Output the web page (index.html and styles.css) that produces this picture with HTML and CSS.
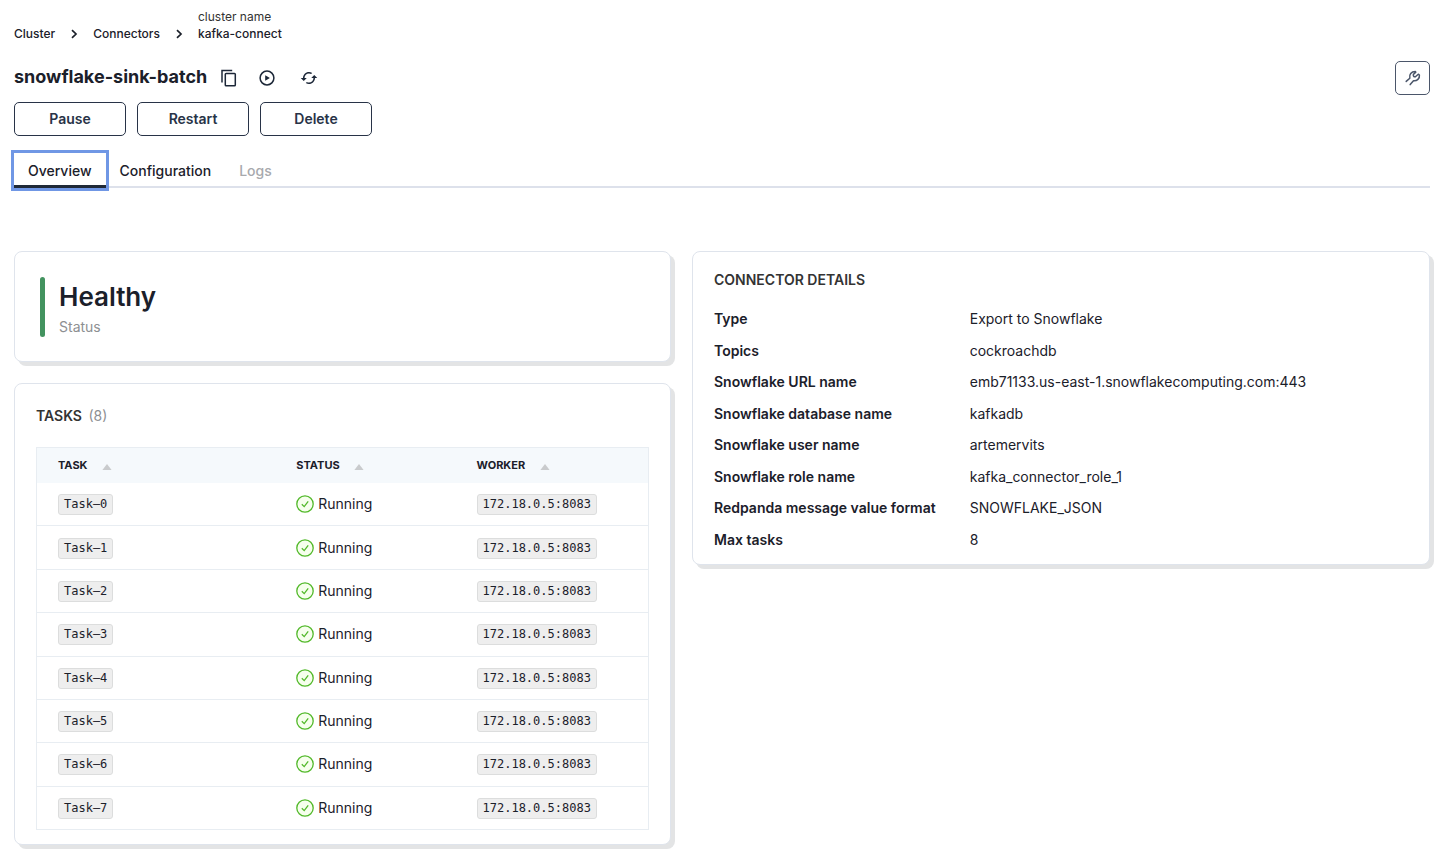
FILE: index.html
```html
<!DOCTYPE html>
<html lang="en">
<head>
<meta charset="utf-8">
<title>snowflake-sink-batch</title>
<link rel="stylesheet" href="styles.css">
</head>
<body>
<svg class="sprite" aria-hidden="true">
  <symbol id="chevron" viewBox="0 0 8 10"><path d="M2 1.2 6 5 2 8.8" fill="none" stroke="currentColor" stroke-width="1.7"/></symbol>
  <symbol id="ok" viewBox="0 0 18 18"><circle cx="9" cy="9" r="8.2" fill="#f6ffed" stroke="#52b92a" stroke-width="1.3"/><path d="M5.8 9.2 8.2 11.6 12.2 6.3" fill="none" stroke="#52b92a" stroke-width="1.3"/></symbol>
  <symbol id="sort" viewBox="0 0 10 6"><path d="M5 0 9.6 6H.4z" fill="#c9cbcd"/></symbol>
</svg>
<main class="page">
  <nav class="breadcrumb" aria-label="Breadcrumb">
    <a href="#">Cluster</a>
    <svg class="chevron"><use href="#chevron"/></svg>
    <a href="#">Connectors</a>
    <svg class="chevron"><use href="#chevron"/></svg>
    <a href="#" class="current"><span class="hint">cluster name</span><span>kafka-connect</span></a>
  </nav>

  <header class="heading">
    <h1>snowflake-sink-batch</h1>
    <button class="icon-button copy" aria-label="Copy name"><svg viewBox="0 0 18 18"><path d="M2 13.5V1.4H12.2" fill="none" stroke="currentColor" stroke-width="1.5"/><rect x="5.3" y="4.4" width="10" height="12.3" rx=".8" fill="none" stroke="currentColor" stroke-width="1.5"/></svg></button>
    <button class="icon-button play" aria-label="Run"><svg viewBox="0 0 18 18"><circle cx="9" cy="9" r="6.9" fill="none" stroke="currentColor" stroke-width="1.5"/><path d="M7.2 6.2 11.9 9 7.2 11.8z" fill="currentColor"/></svg></button>
    <button class="icon-button" aria-label="Refresh"><svg viewBox="0 0 24 24"><path fill="currentColor" d="M19 8l-4 4h3c0 3.31-2.69 6-6 6-1.01 0-1.97-.25-2.8-.7l-1.46 1.46A7.93 7.93 0 0 0 12 20c4.42 0 8-3.58 8-8h3l-4-4zM6 12c0-3.31 2.69-6 6-6 1.01 0 1.97.25 2.8.7l1.46-1.46A7.93 7.93 0 0 0 12 4c-4.42 0-8 3.58-8 8H1l4 4 4-4H6z"/></svg></button>
    <button class="tool" aria-label="Settings"><svg viewBox="0 0 18 18"><path d="M2.2 12.4 5.8 9.2C5 5.5 7.2 2.6 11.3 2.5L11.8 3.2 9.4 5.4C9 6.8 9.8 8 11.4 7.8L14.3 5.2 15.4 6C15.9 9.6 12.9 12.2 9.5 11.7L6.2 15.6" fill="none" stroke="currentColor" stroke-width="1.5" stroke-linejoin="round" stroke-linecap="round"/></svg></button>
  </header>

  <div class="actions">
    <button>Pause</button>
    <button>Restart</button>
    <button>Delete</button>
  </div>

  <div class="tabs" role="tablist">
    <button class="active" role="tab" aria-selected="true">Overview</button>
    <button role="tab" aria-selected="false">Configuration</button>
    <button role="tab" aria-selected="false" disabled>Logs</button>
  </div>

  <div class="columns">
    <div class="left">
      <section class="card health">
        <div class="bar"></div>
        <div>
          <div class="state">Healthy</div>
          <div class="label">Status</div>
        </div>
      </section>

      <section class="card tasks">
        <h2>Tasks <span class="count">(8)</span></h2>
        <table>
          <thead>
            <tr>
              <th class="col-task">Task <svg><use href="#sort"/></svg></th>
              <th class="col-status">Status <svg><use href="#sort"/></svg></th>
              <th>Worker <svg><use href="#sort"/></svg></th>
            </tr>
          </thead>
          <tbody>
            <tr><td><code>Task–0</code></td><td><span class="running"><svg><use href="#ok"/></svg>Running</span></td><td><code>172.18.0.5:8083</code></td></tr>
            <tr><td><code>Task–1</code></td><td><span class="running"><svg><use href="#ok"/></svg>Running</span></td><td><code>172.18.0.5:8083</code></td></tr>
            <tr><td><code>Task–2</code></td><td><span class="running"><svg><use href="#ok"/></svg>Running</span></td><td><code>172.18.0.5:8083</code></td></tr>
            <tr><td><code>Task–3</code></td><td><span class="running"><svg><use href="#ok"/></svg>Running</span></td><td><code>172.18.0.5:8083</code></td></tr>
            <tr><td><code>Task–4</code></td><td><span class="running"><svg><use href="#ok"/></svg>Running</span></td><td><code>172.18.0.5:8083</code></td></tr>
            <tr><td><code>Task–5</code></td><td><span class="running"><svg><use href="#ok"/></svg>Running</span></td><td><code>172.18.0.5:8083</code></td></tr>
            <tr><td><code>Task–6</code></td><td><span class="running"><svg><use href="#ok"/></svg>Running</span></td><td><code>172.18.0.5:8083</code></td></tr>
            <tr><td><code>Task–7</code></td><td><span class="running"><svg><use href="#ok"/></svg>Running</span></td><td><code>172.18.0.5:8083</code></td></tr>
          </tbody>
        </table>
      </section>
    </div>

    <section class="card details">
      <h2>Connector Details</h2>
      <dl>
        <dt>Type</dt><dd>Export to Snowflake</dd>
        <dt>Topics</dt><dd>cockroachdb</dd>
        <dt>Snowflake URL name</dt><dd>emb71133.us-east-1.snowflakecomputing.com:443</dd>
        <dt>Snowflake database name</dt><dd>kafkadb</dd>
        <dt>Snowflake user name</dt><dd>artemervits</dd>
        <dt>Snowflake role name</dt><dd>kafka_connector_role_1</dd>
        <dt>Redpanda message value format</dt><dd>SNOWFLAKE_JSON</dd>
        <dt>Max tasks</dt><dd>8</dd>
      </dl>
    </section>
  </div>
</main>
</body>
</html>
```
FILE: styles.css
```css
* { box-sizing: border-box; }
body {
  margin: 0;
  background: #fff;
  color: #1b202a;
  font: 14px/20px Inter, "Liberation Sans", sans-serif;
}
button {
  font: inherit;
  color: inherit;
  background: none;
  border: 0;
  padding: 0;
}
svg { display: block; }
h1, h2, dl, dd { margin: 0; }
.sprite { position: absolute; width: 0; height: 0; }
.page { padding: 8px 7px 12px 14px; }

.breadcrumb {
  display: flex;
  align-items: flex-end;
  font-size: 12px;
  line-height: 17px;
  font-weight: 500;
}
.breadcrumb a { color: inherit; text-decoration: none; }
.chevron { width: 8px; height: 10px; margin: 0 15px 3px; }
.current { display: flex; flex-direction: column; }
.hint { font-weight: 400; color: #333; }

.heading {
  display: flex;
  align-items: center;
  margin-top: 19px;
  color: #1c2738;
}
h1 {
  margin-right: 13px;
  padding-bottom: 2px;
  font-size: 18px;
  line-height: 24px;
  font-weight: 700;
  color: #1b202a;
}
.icon-button svg { width: 18px; height: 18px; }
.copy { margin-right: 20px; }
.play { margin-right: 24px; }
.tool {
  display: grid;
  place-items: center;
  width: 35px;
  height: 34px;
  margin-left: auto;
  border: 1px solid #4b566a;
  border-radius: 5px;
  color: #4b566a;
}
.tool svg { width: 18px; height: 18px; }

.actions { display: flex; gap: 11px; margin-top: 7px; }
.actions button {
  width: 112px;
  height: 34px;
  border: 1px solid #283347;
  border-radius: 5px;
  color: #283347;
  font-weight: 600;
}

.tabs {
  display: flex;
  margin-top: 17px;
  border-bottom: 2px solid #dde1eb;
}
.tabs button {
  padding: 8px 14px 7px;
  margin-bottom: -2px;
  font-weight: 500;
}
.tabs .active {
  border-bottom: 3px solid #1f2937;
  padding-bottom: 4px;
  outline: 3px solid #7097e5;
}
.tabs button:disabled { color: #a7a9ad; }

.columns {
  display: grid;
  grid-template-columns: 657fr 738fr;
  align-items: start;
  gap: 21px;
  margin-top: 63px;
}
.left { display: grid; gap: 21px; }
.card {
  border: 1px solid #dfe4ec;
  border-radius: 8px;
  box-shadow: 4px 4px 0 #e3e4e5;
  background: #fff;
}
.health { display: flex; gap: 14px; padding: 25px 25px 24px; }
.bar { width: 5px; height: 60px; border-radius: 3px; background: #43935f; }
.state { font-size: 26px; line-height: 40px; font-weight: 600; }
.label { color: #8d8f92; }

h2 {
  font-size: 14px;
  line-height: 20px;
  font-weight: 600;
  text-transform: uppercase;
  color: #333;
}
.tasks { padding: 22px 21px 14px; }
.count { margin-left: 3px; font-weight: 400; color: #8d8f92; }
table {
  width: 100%;
  height: 383px;
  margin-top: 21px;
  table-layout: fixed;
  border: 1px solid #e8edf2;
  border-bottom: 0;
  border-spacing: 0;
}
th {
  height: 35px;
  padding: 0 21px 2px;
  background: #f5f9fc;
  text-align: left;
  text-transform: uppercase;
  font-size: 11px;
  font-weight: 700;
}
th svg { display: inline-block; width: 10px; height: 6px; margin-left: 12px; vertical-align: -1px; }
.col-task { width: 39%; }
.col-status { width: 29.5%; }
td { padding: 0 21px; border-bottom: 1px solid #e8edf2; }
code {
  display: inline-block;
  padding: 0 5px;
  border: 1px solid #dcdddd;
  border-radius: 3px;
  background: #eee;
  font: 12px/19px "DejaVu Sans Mono", monospace;
}
.running { display: flex; align-items: center; gap: 4px; }
.running svg { width: 18px; height: 18px; }

.details { padding: 18px 21px 14px; }
dl {
  display: grid;
  grid-template-columns: auto 1fr;
  align-content: space-between;
  column-gap: 34px;
  row-gap: 11px;
  min-height: 241px;
  margin-top: 19px;
}
dt { font-weight: 600; }
```
